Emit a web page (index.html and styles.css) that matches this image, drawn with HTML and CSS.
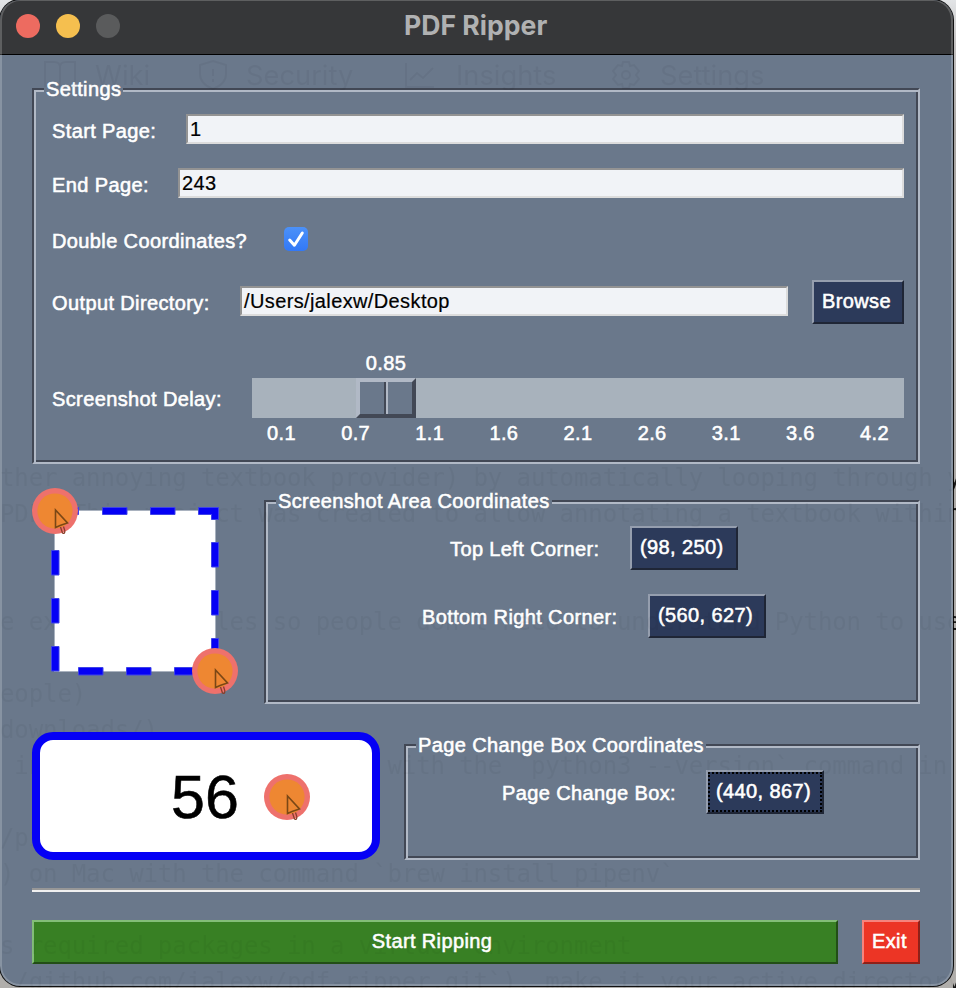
FILE: index.html
```html
<!DOCTYPE html>
<html lang="en">
<head>
<meta charset="utf-8">
<title>PDF Ripper</title>
<link rel="stylesheet" href="styles.css">
</head>
<body>
<svg width="0" height="0" class="defs">
  <defs>
    <g id="click">
      <circle r="23" fill="#ee716c"/>
      <circle r="17.6" fill="#ee8732"/>
      <path d="M.5 -1V16.500L5 14.500L12.500 12Z" fill="none" stroke="#7a4716" stroke-width="1.600"/>
      <path d="M5.500 16L7.500 22Q10 23.500 9.800 19.500L8.500 15.500" fill="none" stroke="#8a3f2a" stroke-width="1.300"/>
    </g>
  </defs>
</svg>
<div class="window">
  <header class="titlebar">
    <i class="light close"></i><i class="light minimize"></i><i class="light zoom"></i>
    <h1 class="title">PDF Ripper</h1>
  </header>
  <main class="content">
    <section class="frame settings">
      <span class="legend">Settings</span>
      <div class="row"><label class="label start">Start Page:</label><div class="input">1</div></div>
      <div class="row"><label class="label end">End Page:</label><div class="input">243</div></div>
      <div class="row check-row"><label class="label double">Double Coordinates?</label>
        <svg class="checkbox" width="24" height="24" viewBox="0 0 24 24"><defs><linearGradient id="cb" x2="0" y2="1"><stop stop-color="#4c91f8"/><stop offset="1" stop-color="#3278f6"/></linearGradient></defs><rect width="24" height="24" rx="5" fill="url(#cb)"/><path d="M5.700 13L10.400 18.200L18.300 6" fill="none" stroke="#fff" stroke-width="3" stroke-linecap="round" stroke-linejoin="round"/></svg>
      </div>
      <div class="row dir-row"><label class="label output">Output Directory:</label><div class="input dir">/Users/jalexw/Desktop</div><div class="button browse">Browse</div></div>
      <div class="row delay-row"><label class="label delay">Screenshot Delay:</label>
        <div class="slider">
          <div class="value">0.85</div>
          <div class="trough"><div class="thumb"><i></i><i></i></div></div>
          <div class="ticks"><span>0.1</span><span>0.7</span><span>1.1</span><span>1.6</span><span>2.1</span><span>2.6</span><span>3.1</span><span>3.6</span><span>4.2</span></div>
        </div>
      </div>
    </section>
    <div class="group area-group">
      <svg class="area-picture" width="208" height="208" viewBox="32 488 208 208">
        <rect x="54.500" y="510.500" width="161" height="161" fill="#fff" stroke="#a9b2bf"/>
        <g fill="#0500f5" stroke="#3f43e8" stroke-width="1">
          <path d="M76.500 507.500h2v7h-2zM102.500 507.500h24.500v7h-24.500zM150.500 507.500h24.500v7h-24.500zM198.500 507.500H218.500V519.500H211.500V514.500H198.500z"/>
          <path d="M211.500 542.500h7v24.500h-7zM211.500 590.500h7v24.500h-7zM211.500 638.500h7v15h-7z"/>
          <path d="M51.500 550.500h7.500v24.500h-7.500zM51.500 598.500h7.500v24.500h-7.500zM51.500 646.500h7.500v24.500h-7.500z"/>
          <path d="M78.500 667.500h24.500v7.500h-24.500zM126.500 667.500h24.500v7.500h-24.500zM174.500 667.500h24.500v7.500h-24.500z"/>
        </g>
        <use href="#click" x="55" y="511"/><use href="#click" x="215" y="671"/>
      </svg>
      <section class="frame area">
        <span class="legend">Screenshot Area Coordinates</span>
        <div class="row top-left"><label class="label">Top Left Corner:</label><div class="button">(98, 250)</div></div>
        <div class="row bottom-right"><label class="label">Bottom Right Corner:</label><div class="button">(560, 627)</div></div>
      </section>
    </div>
    <div class="group page-group">
      <div class="page-picture"><span class="number">56</span>
        <svg width="46" height="46" viewBox="-23 -23 46 46"><use href="#click"/></svg>
      </div>
      <section class="frame page">
        <span class="legend">Page Change Box Coordinates</span>
        <div class="row change"><label class="label">Page Change Box:</label><div class="button focused">(440, 867)</div></div>
      </section>
    </div>
    <div class="separator"></div>
    <div class="actions"><div class="button go">Start Ripping</div><div class="button exit">Exit</div></div>
  </main>
</div>
<div class="ghost-tabs" aria-hidden="true">
  <svg width="32" height="30" viewBox="0 0 32 30"><path d="M1 2H10Q16 2 16 7Q16 2 22 2H31V26H21Q16 26 16 29Q16 26 11 26H1ZM16 7V29"/></svg><span class="tab wiki">Wiki</span>
  <svg width="28" height="30" viewBox="0 0 28 30"><path d="M14 1L27 5V14Q27 24 14 29Q1 24 1 14V5ZM14 9V16M14 19V22"/></svg><span class="tab security">Security</span>
  <svg width="32" height="28" viewBox="0 0 32 28"><path d="M2 2V26H30M6 19L13 12L19 17L29 7"/></svg><span class="tab insights">Insights</span>
  <svg width="30" height="30" viewBox="0 0 30 30"><circle cx="15" cy="15" r="4"/><path d="M12 2H18L19 6L23 5L28 11L25 15L28 19L23 25L19 24L18 28H12L11 24L7 25L2 19L5 15L2 11L7 5L11 6Z"/></svg><span class="tab">Settings</span>
</div>
<pre class="ghost" aria-hidden="true">ther annoying textbook provider) by automatically looping through y
PDF. This project was created to allow annotating a textbook within


e executable files so people don't need to understand Python to use

eople)
downloads/)
 installed it successfully with the `python3 --version` command in

/pipenv/)
) on Mac with the command `brew install pipenv`

s required packages in a virtual environment
 /github.com/jalexw/pdf-ripper.git`), make it your active directory</pre>
</body>
</html>
```
FILE: styles.css
```css
* { box-sizing: border-box; }
html, body { height: 100%; }
body {
  margin: 0;
  position: relative;
  overflow: hidden;
  background: linear-gradient(#e2e4e6, #c4c2c2 45px, #aaa6a3 130px, #b0aeab);
  font: 20px "Liberation Sans", Arial, sans-serif;
  letter-spacing: .38px;
  color: #fff;
  white-space: nowrap;
}
.defs { display: block; }
.window {
  width: 953px;
  height: 986px;
  border-radius: 20px;
  background: #6a788b;
  box-shadow: 0 0 0 1px #111;
  overflow: hidden;
  position: relative;
}
.window::after {
  content: "";
  position: absolute;
  inset: 0;
  border: 2px solid rgba(255, 255, 255, .2);
  border-top-width: 1px;
  border-radius: 20px;
}
.titlebar {
  height: 55px;
  padding: 0 16px;
  display: flex;
  align-items: center;
  gap: 16px;
  background: #363739;
  border-bottom: 1px solid #000;
}
.light { width: 24px; height: 24px; border-radius: 50%; margin-top: -2px; }
.close { background: #ed6b60; }
.minimize { background: #f5bf4f; }
.zoom { background: #5a5b5c; }
.title {
  margin: -5px 0 0 268px;
  font: 700 26.6px Inter, sans-serif;
  letter-spacing: 0;
  color: #b0b1b2;
}
.content { padding: 33px 33px 0 32px; -webkit-text-stroke: .55px currentColor; }
.frame {
  position: relative;
  border: 2px solid;
  border-color: #424855 #b1b9c6 #b1b9c6 #424855;
  box-shadow: inset 2px 2px 0 #b1b9c6, inset -2px -2px 0 #424855;
}
.legend {
  position: absolute;
  left: 10px;
  top: -12px;
  height: 22px;
  line-height: 22px;
  padding: 0 2px;
  background: #6a788b;
}
.settings { height: 376px; padding: 24px 14px 0 18px; }
.row { display: flex; align-items: center; }
.label { line-height: 26px; padding-top: 3px; }
.settings .row { height: 30px; margin-bottom: 24px; }
.start { width: 134px; }
.end { width: 126px; }
.double { width: 232px; }
.settings .output { width: 188px; padding-top: 1px; }
.settings .delay { width: 200px; padding-top: 3px; }
.input {
  flex: 1;
  height: 30px;
  line-height: 26px;
  padding-left: 2px;
  color: #000;
  background: #f1f3f7;
  border: 2px solid;
  border-color: #939393 #dcdcdc #dcdcdc #939393;
  -webkit-text-stroke: .2px;
}
.settings .check-row { height: 34px; }
.settings .dir-row { height: 44px; }
.dir { margin: -2px 24px 0 0; }
.button {
  height: 44px;
  line-height: 38px;
  padding: 0 8px;
  background: #2c3a5a;
  border: 2px solid;
  border-color: #959eae #1f2636 #1f2636 #959eae;
}
.browse { width: 92px; }
.settings .delay-row { height: 98px; }
.slider { flex: 1; height: 98px; }
.value { height: 30px; line-height: 30px; width: 60px; margin-left: 104px; text-align: center; }
.trough { height: 40px; background: #a8b2bc; display: flex; }
.thumb {
  margin-left: 104px;
  width: 60px;
  height: 40px;
  display: flex;
  border: solid;
  border-width: 4px;
  border-color: #b1b9c6 #424855 #424855 #b1b9c6;
  background: #6a788b;
}
.thumb i { flex: 1; }
.thumb i:first-child { border-right: 2px solid #424855; }
.thumb i:last-child { border-left: 2px solid #b1b9c6; }
.ticks { display: flex; justify-content: space-between; padding: 0 15px; line-height: 30px; }
.group { display: flex; justify-content: space-between; }
.area-group { margin-top: 24px; height: 216px; align-items: flex-end; }
.area-picture { display: block; align-self: flex-start; position: relative; z-index: 2; }
.area { width: 656px; height: 204px; padding-top: 24px; }
.area .row { height: 44px; margin-bottom: 24px; }
.area .label, .page .label { padding-top: 1px; }
.area .button, .page .button { margin-left: 30px; }
.top-left .label { width: 150px; }
.top-left { padding-left: 184px; }
.top-left .button { width: 108px; }
.bottom-right { padding-left: 156px; }
.bottom-right .label { width: 196px; }
.bottom-right .button, .change .button { width: 118px; }
.page-group { margin-top: 28px; height: 128px; align-items: flex-end; }
.page-picture {
  position: relative;
  z-index: 2;
  width: 348px;
  height: 128px;
  border: 8px solid #0500f5;
  border-radius: 21px;
  background: #fff;
  display: flex;
  align-items: center;
  padding: 2px 0 0 130px;
}
.number { color: #000; font-size: 61px; line-height: 70px; letter-spacing: 0; width: 94px; padding-left: 1px; }
.page { width: 516px; height: 116px; padding-top: 24px; }
.change { height: 44px; padding-left: 96px; }
.change .label { width: 174px; }
.focused { position: relative; }
.focused::after { content: ""; position: absolute; inset: 0; border: 2px dotted #000; }
.separator { margin-top: 28px; height: 4px; border-top: 2px solid #979797; background: #f0f0f0; }
.actions { display: flex; justify-content: space-between; margin-top: 28px; }
.go { width: 806px; text-align: center; padding-right: 14px; background: #388024; border-color: #83bd78 #224e16 #224e16 #83bd78; }
.exit { width: 58px; background: #ec3525; border-color: #f5847d #8f2018 #8f2018 #f5847d; }
.ghost-tabs {
  position: absolute;
  left: 44px;
  top: 60px;
  height: 30px;
  overflow: hidden;
  display: flex;
  align-items: center;
  font: 27.3px Inter, sans-serif;
  letter-spacing: 0;
  color: #000;
  opacity: .04;
  pointer-events: none;
}
.ghost-tabs svg { fill: none; stroke: #000; stroke-width: 2; margin-right: 19px; }
.tab { width: 108px; }
.wiki { width: 104px; }
.security { width: 158px; }
.security + svg { margin-right: 20px; }
.insights { width: 155px; }
.ghost {
  position: absolute;
  left: 0;
  top: 460px;
  margin: 0;
  width: 956px;
  height: 528px;
  overflow: hidden;
  font: 24px/36px "DejaVu Sans Mono", monospace;
  letter-spacing: -.1px;
  color: transparent;
  background: linear-gradient(to right, rgba(0, 0, 0, .038) 953px, rgba(0, 0, 0, .85) 953px);
  -webkit-background-clip: text;
  background-clip: text;
  pointer-events: none;
}
```
